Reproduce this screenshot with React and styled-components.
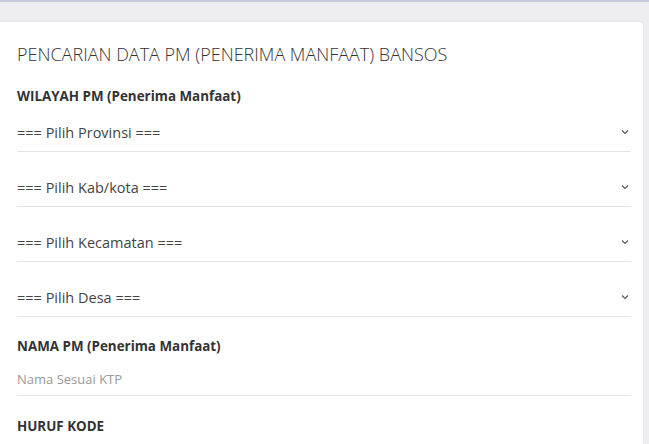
import React from "react";
import styled, { createGlobalStyle } from "styled-components";

const Global = createGlobalStyle`
  html, body { margin: 0; padding: 0; }
  body {
    background: #eeedf0;
    font-family: "Open Sans", "Noto Sans", sans-serif;
    color: #333;
    border-top: 2px solid #c9c8e2;
  }
`;

const Page = styled.div`
  padding: 20px 6px 0 0;
`;

const Card = styled.div`
  background: #fff;
  border-radius: 0 4px 0 0;
  box-shadow: 0 -1px 3px rgba(0,0,0,0.05);
  padding: 20px 12px 0 17px;
  height: 422px;
  box-sizing: border-box;
  overflow: hidden;
`;

const Title = styled.h1`
  margin: 0 0 21px;
  font-size: 18px;
  font-weight: 300;
  color: #333;
  line-height: 24px;
`;

const Label = styled.div`
  font-size: 13.4px;
  font-weight: 700;
  color: #333;
  line-height: 18px;
  margin-bottom: ${p => p.$mb ?? 8}px;
`;

const Field = styled.div`
  display: flex;
  align-items: center;
  justify-content: space-between;
  height: ${p => p.$h || 37}px;
  border-bottom: 1px solid #e3e3e3;
  font-size: ${p => (p.$placeholder ? 13 : 14.5)}px;
  color: ${p => (p.$placeholder ? "#9a9a9a" : "#444")};
  margin-bottom: ${p => p.$mb ?? 16}px;
  padding-right: 2px;
`;

const Chevron = () => (
  <svg width="8" height="6" viewBox="0 0 8 6" fill="none">
    <path d="M1 1.5 L4 4.5 L7 1.5" stroke="#555" strokeWidth="1.1" />
  </svg>
);

const selects = [
  "=== Pilih Provinsi ===",
  "=== Pilih Kab/kota ===",
  "=== Pilih Kecamatan ===",
  "=== Pilih Desa ===",
];

export default function App() {
  return (
    <>
      <Global />
      <Page>
        <Card>
          <Title>PENCARIAN DATA PM (PENERIMA MANFAAT) BANSOS</Title>
          <Label>WILAYAH PM (Penerima Manfaat)</Label>
          {selects.map((s, i) => (
            <Field key={s} $h={38} $mb={i === selects.length - 1 ? 20 : 16}>
              <span>{s}</span>
              <Chevron />
            </Field>
          ))}
          <Label $mb={8}>NAMA PM (Penerima Manfaat)</Label>
          <Field $placeholder $h={32} $mb={21}>
            <span>Nama Sesuai KTP</span>
          </Field>
          <Label>HURUF KODE</Label>
        </Card>
      </Page>
    </>
  );
}
